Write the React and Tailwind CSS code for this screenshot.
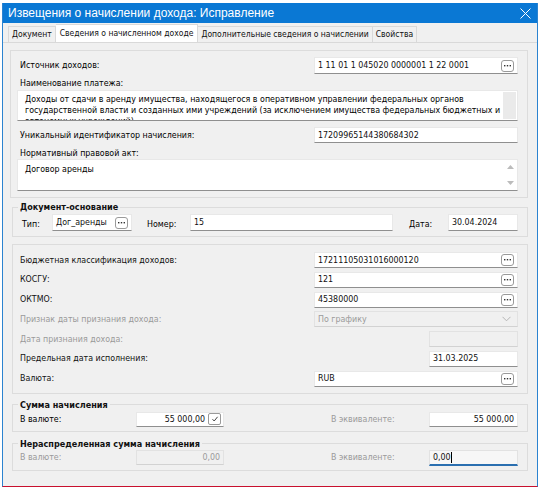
import React from "react";

const font = { fontFamily: '"DejaVu Sans Condensed", "Liberation Sans", Arial, sans-serif' };
const titleFont = { fontFamily: '"Liberation Sans", Arial, sans-serif' };

function DotsButton() {
  return (
    <span className="w-[13px] h-[12px] mr-[3px] shrink-0 border border-[#9a9a9a] rounded-[3px] bg-white flex items-center justify-center">
      <svg width="7" height="2" viewBox="0 0 7 2">
        <rect x="0" y="0" width="1.4" height="1.4" fill="#333" />
        <rect x="2.8" y="0" width="1.4" height="1.4" fill="#333" />
        <rect x="5.6" y="0" width="1.4" height="1.4" fill="#333" />
      </svg>
    </span>
  );
}

function Field({ value, width = "w-[204px]", h = "h-[16px]", btn, check, right, disabled, focused, select }) {
  const base = disabled
    ? "bg-[#f0f0f0] border border-[#e2e2e2] border-b-[#d2d2d2] text-[#9a9a9a]"
    : focused
    ? "bg-[#f7f7f7] border border-[#e2e2e2] border-b-[2px] border-b-[#2a6fb0] text-[#111]"
    : "bg-white border border-[#e8e8e8] border-b-[#8f8f8f] text-[#111]";
  return (
    <div className={`${width} ${h} ${base} flex items-center shrink-0`}>
      <span className={`flex-1 px-[3px] truncate ${right ? "text-right" : ""}`}>
        {value}
        {focused && <span className="inline-block w-px h-[11px] bg-black align-middle" />}
      </span>
      {btn && <DotsButton />}
      {check && (
        <span className="w-[13px] h-[12px] mr-[2px] border border-[#9a9a9a] rounded-[2px] bg-white flex items-center justify-center">
          <svg width="8" height="8" viewBox="0 0 8 8">
            <path d="M1.5 4.2 L3.2 6 L6.6 1.8" stroke="#444" strokeWidth="1" fill="none" />
          </svg>
        </span>
      )}
      {select && (
        <svg className="mr-[6px]" width="9" height="6" viewBox="0 0 9 6">
          <path d="M0.5 0.8 L4.5 4.8 L8.5 0.8" stroke="#b5b5b5" fill="none" />
        </svg>
      )}
    </div>
  );
}

function Row({ label, gray, children }) {
  return (
    <div className="h-[16px] flex items-center justify-between">
      <span className={gray ? "text-[#9a9a9a]" : "text-[#111]"}>{label}</span>
      {children}
    </div>
  );
}

function Group({ title, className = "", children }) {
  return (
    <fieldset className={`border border-[#dcdcdc] ml-[9px] mr-[9px] ${className}`}>
      <legend className="ml-[5px] px-[2px] font-bold text-[#111] text-[9px] leading-[12px]">{title}</legend>
      {children}
    </fieldset>
  );
}

export default function App() {
  return (
    <div className="w-[549px] h-[496px] bg-white pl-[2px] pt-[3px] text-[8.8px] leading-[11px]" style={font}>
      <div className="w-[536px] h-[484px] border-x border-[#2b83d0] border-b border-b-[#c8102e] bg-[#f0f0f0] flex flex-col">
        {/* title */}
        <div className="h-[20px] bg-[#0a78d4] flex items-center justify-between pl-[5px] pr-[6px] text-white text-[12px]" style={titleFont}>
          <span>Извещения о начислении дохода: Исправление</span>
          <svg width="11" height="11" viewBox="0 0 11 11">
            <path d="M0.5 0.5 L10.5 10.5 M10.5 0.5 L0.5 10.5" stroke="white" strokeWidth="1" />
          </svg>
        </div>

        {/* tabs */}
        <div className="h-[19px] flex items-end pl-[5px] text-[8.5px]">
          <div className="h-[16px] px-[3px] border border-[#d9d9d9] border-b-0 flex items-center text-[#111]">Документ</div>
          <div className="h-[18px] px-[4px] bg-white border border-[#d9d9d9] border-b-0 border-l-0 flex items-center text-[#111]">
            Сведения о начисленном доходе
          </div>
          <div className="h-[16px] px-[3px] border border-[#d9d9d9] border-b-0 border-l-0 flex items-center text-[#111]">
            Дополнительные сведения о начислении
          </div>
          <div className="h-[16px] px-[3px] border border-[#d9d9d9] border-b-0 border-l-0 flex items-center text-[#111]">Свойства</div>
        </div>

        {/* page */}
        <div className="flex-1 border-t border-[#d9d9d9] pt-[7px] flex flex-col">
          {/* panel 1 */}
          <div className="ml-[7px] mr-[9px] border border-[#dcdcdc] pl-[9px] pr-[9px] pt-[6px] pb-[6px] flex flex-col">
            <div className="h-[17px] flex items-center justify-between">
              <span>Источник доходов:</span>
              <Field value="1 11 01 1 045020 0000001 1 22 0001" h="h-[17px]" btn />
            </div>
            <div className="mt-[2px] h-[14px] flex items-center">Наименование платежа:</div>
            <div className="h-[31px] bg-white border border-[#e8e8e8] border-b-[#8f8f8f] flex -ml-[3px]">
              <div className="flex-1 px-[7px] pt-[3px] overflow-hidden leading-[11px] whitespace-nowrap">
                Доходы от сдачи в аренду имущества, находящегося в оперативном управлении федеральных органов
                <br />
                государственной власти и созданных ими учреждений (за исключением имущества федеральных бюджетных и
                <br />
                автономных учреждений)
              </div>
              <div className="w-[13px] bg-[#eaeaea] my-[1px] mr-[1px]" />
            </div>
            <div className="mt-[6px] h-[16px] flex items-center justify-between">
              <span>Уникальный идентификатор начисления:</span>
              <Field value="17209965144380684302" />
            </div>
            <div className="mt-[4px] h-[12px] flex items-center">Нормативный правовой акт:</div>
            <div className="h-[32px] bg-white border border-[#e8e8e8] border-b-[#8f8f8f] flex -ml-[3px]">
              <div className="flex-1 px-[7px] pt-[4px]">Договор аренды</div>
              <div className="w-[13px] flex flex-col items-center justify-between py-[5px]">
                <svg width="7" height="4" viewBox="0 0 7 4"><path d="M0 4 L3.5 0 L7 4 Z" fill="#bcbcbc" /></svg>
                <svg width="7" height="4" viewBox="0 0 7 4"><path d="M0 0 L3.5 4 L7 0 Z" fill="#bcbcbc" /></svg>
              </div>
            </div>
          </div>

          {/* Документ-основание */}
          <Group title="Документ-основание" className="mt-[3px]">
            <div className="flex items-center pl-[9px] pr-[9px] pt-[1px] pb-[5px]">
              <span className="w-[30px] pt-[4px]">Тип:</span>
              <Field value="Дог_аренды" width="w-[80px]" h="h-[17px]" btn />
              <span className="ml-[15px] w-[43px] pt-[4px]">Номер:</span>
              <Field value="15" width="w-[203px]" h="h-[17px]" />
              <span className="ml-[16px] flex-1 pt-[4px]">Дата:</span>
              <Field value="30.04.2024" width="w-[70px]" h="h-[17px]" />
            </div>
          </Group>

          {/* panel 3 */}
          <div className="mt-[7px] ml-[9px] mr-[9px] border border-[#dcdcdc] pl-[7px] pr-[9px] pt-[7px] pb-[6px] flex flex-col gap-[3.8px]">
            <Row label="Бюджетная классификация доходов:">
              <Field value="17211105031016000120" btn />
            </Row>
            <Row label="КОСГУ:">
              <Field value="121" btn />
            </Row>
            <Row label="ОКТМО:">
              <Field value="45380000" btn />
            </Row>
            <Row label="Признак даты признания дохода:" gray>
              <Field value="По графику" disabled select />
            </Row>
            <Row label="Дата признания дохода:" gray>
              <Field value="" width="w-[89px]" disabled />
            </Row>
            <Row label="Предельная дата исполнения:">
              <Field value="31.03.2025" width="w-[89px]" />
            </Row>
            <Row label="Валюта:">
              <Field value="RUB" btn />
            </Row>
          </div>

          {/* Сумма начисления */}
          <Group title="Сумма начисления" className="mt-[5px]">
            <div className="flex items-center pl-[7px] pr-[9px] pt-[1px] pb-[4px]">
              <span className="w-[116px]">В валюте:</span>
              <Field value="55 000,00" width="w-[88px]" h="h-[15px]" right check />
              <span className="ml-[107px] flex-1 text-[#9a9a9a]">В эквиваленте:</span>
              <Field value="55 000,00" width="w-[89px]" h="h-[15px]" right />
            </div>
          </Group>

          {/* Нераспределенная сумма */}
          <Group title="Нераспределенная сумма начисления" className="mt-[6px]">
            <div className="flex items-center pl-[7px] pr-[9px] pt-0 pb-[4px]">
              <span className="w-[116px] text-[#9a9a9a]">В валюте:</span>
              <Field value="0,00" width="w-[88px]" h="h-[15px]" right disabled />
              <span className="ml-[107px] flex-1 text-[#9a9a9a]">В эквиваленте:</span>
              <Field value="0,00" width="w-[89px]" h="h-[16px]" focused />
            </div>
          </Group>
        </div>
      </div>
    </div>
  );
}
